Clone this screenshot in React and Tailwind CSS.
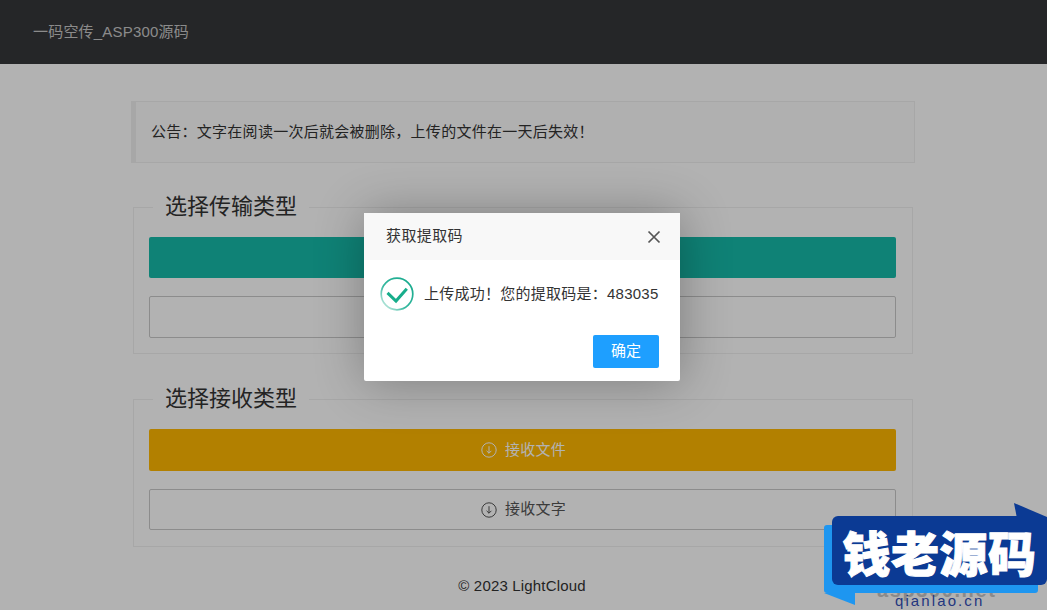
import React from "react";

const font = { fontFamily: '"Liberation Sans","Noto Sans CJK SC",sans-serif' };

function DownIcon({ className }) {
  return (
    <svg viewBox="0 0 16 16" className={className} fill="none" stroke="currentColor" strokeWidth="1">
      <circle cx="8" cy="8" r="7.2" />
      <path d="M8 4.2v7M5.6 8.8 8 11.2l2.4-2.4" />
    </svg>
  );
}

function Section({ title, children, pb }) {
  return (
    <fieldset className={`border border-[#f0f0f0] pl-[15px] pr-[16px] pt-[15px] mx-[2px] ${pb}`}>
      <legend className="ml-[4px] px-[12px] text-[22px] leading-[30px] text-[#333]">{title}</legend>
      {children}
    </fieldset>
  );
}

function Btn({ label, solid, h, mt }) {
  return (
    <div className={`${h} ${mt} rounded-[2px] flex items-center justify-center gap-[8px] pl-[2px] text-[15px] ${solid ? solid + " text-white" : "border border-[#c9c9c9] bg-white text-[#555]"}`}>
      <DownIcon className="w-[16px] h-[16px]" />
      <span className="tracking-[0.2px]">{label}</span>
    </div>
  );
}

export default function App() {
  return (
    <div className="relative w-[1047px] h-[610px] overflow-hidden bg-white text-[15px] text-[#333]" style={font}>
      <header className="h-16 bg-[#36373a] flex items-center pl-[33px]">
        <span className="text-[15px] tracking-[0.2px] text-[#c8c8c8]">一码空传_ASP300源码</span>
      </header>

      <main className="w-[784px] ml-[131px] flex flex-col">
        <div className="mt-[37px] h-[62px] flex items-center border border-[#f0f0f0] border-l-[5px] border-l-[#f0f0f0] bg-[#fdfdfd] pl-[15px] text-[15px] tracking-[0.27px]">
          公告：文字在阅读一次后就会被删除，上传的文件在一天后失效！
        </div>

        <div className="mt-[29px]">
          <Section title="选择传输类型" pb="pb-[15px]">
            <Btn label="发送文件" solid="bg-[#16baaa]" h="h-[41px]" mt="" />
            <Btn label="发送文字" h="h-[42px]" mt="mt-[18px]" />
          </Section>
        </div>

        <div className="mt-[30px]">
          <Section title="选择接收类型" pb="pb-[16px]">
            <Btn label="接收文件" solid="bg-[#ffb800]" h="h-[42px]" mt="" />
            <Btn label="接收文字" h="h-[41px]" mt="mt-[18px]" />
          </Section>
        </div>

        <footer className="mt-[29px] text-center text-[15px] tracking-[0.17px] leading-[20px] text-[#333] pr-[2px]">© 2023 LightCloud</footer>
      </main>

      {/* shade */}
      <div className="absolute inset-0 bg-black/30" />

      {/* dialog */}
      <div className="absolute left-[364px] top-[213px] w-[316px] h-[168px] bg-white rounded-[2px] shadow-[1px_1px_50px_rgba(0,0,0,0.3)]">
        <div className="h-[47px] bg-[#f8f8f8] flex items-center justify-between pl-[22px] pr-[18px] text-[15px] tracking-[0.4px] text-[#333]">
          <span>获取提取码</span>
          <svg viewBox="0 0 16 16" className="w-[16px] h-[16px] text-[#555]" fill="none" stroke="currentColor" strokeWidth="1.7">
            <path d="M2.5 2.5l11 11M13.5 2.5l-11 11" />
          </svg>
        </div>
        <div className="flex items-center pl-[16px] pt-[17px]">
          <svg viewBox="0 0 34 34" className="w-[34px] h-[34px] shrink-0" fill="none">
            <defs>
              <linearGradient id="ring" x1="1" y1="0.1" x2="0.1" y2="1">
                <stop offset="0" stopColor="#16a98c" />
                <stop offset="0.6" stopColor="#35b89f" />
                <stop offset="1" stopColor="#cfeee6" />
              </linearGradient>
            </defs>
            <circle cx="17" cy="17" r="15.8" stroke="url(#ring)" strokeWidth="1.7" />
            <path d="M7.5 15.8 16 24 26.8 11.8" stroke="#17ad8b" strokeWidth="3" />
          </svg>
          <span className="ml-[10px] text-[15px] text-[#333] tracking-[0.25px]">上传成功！您的提取码是：483035</span>
        </div>
        <div className="flex justify-end pr-[21px] mt-[24px]">
          <div className="w-[66px] h-[33px] rounded-[2px] bg-[#1e9fff] text-white flex items-center justify-center text-[15px]">确定</div>
        </div>
      </div>

      {/* watermark */}
      <div className="absolute left-[824px] top-[503px] w-[223px] h-[107px]">
        <div className="absolute left-[53px] top-[80px] text-[20px] leading-[14px] font-bold text-[#8a8a8a] tracking-[1.6px]">asp300.net</div>
        <div className="absolute left-0 top-[22px] w-[214px] h-[68px] bg-[#1e96f0] rounded-[3px]" />
        <svg viewBox="0 0 31 12" className="absolute left-0 top-[90px] w-[31px] h-[12px]">
          <path d="M0 0h31v12z" fill="#1e96f0" />
        </svg>
        <svg viewBox="0 0 33 26" className="absolute left-[190px] top-0 w-[33px] h-[26px]">
          <path d="M0 0 33 14v12H5z" fill="#0b3a94" />
        </svg>
        <div className="absolute left-[8px] top-[13px] w-[215px] h-[69px] rounded-[6px] bg-[#0b3a94] flex items-center justify-center">
          <span className="text-[48px] tracking-[0.5px] leading-none font-black text-white whitespace-nowrap [-webkit-text-stroke:1px_white]" style={{ fontFamily: '"Noto Sans CJK SC",sans-serif' }}>钱老源码</span>
        </div>
        <div className="absolute left-[71px] top-[91px] text-[15px] leading-[14px] text-[#23367f] tracking-[2.1px]">qianlao.cn</div>
      </div>
    </div>
  );
}
